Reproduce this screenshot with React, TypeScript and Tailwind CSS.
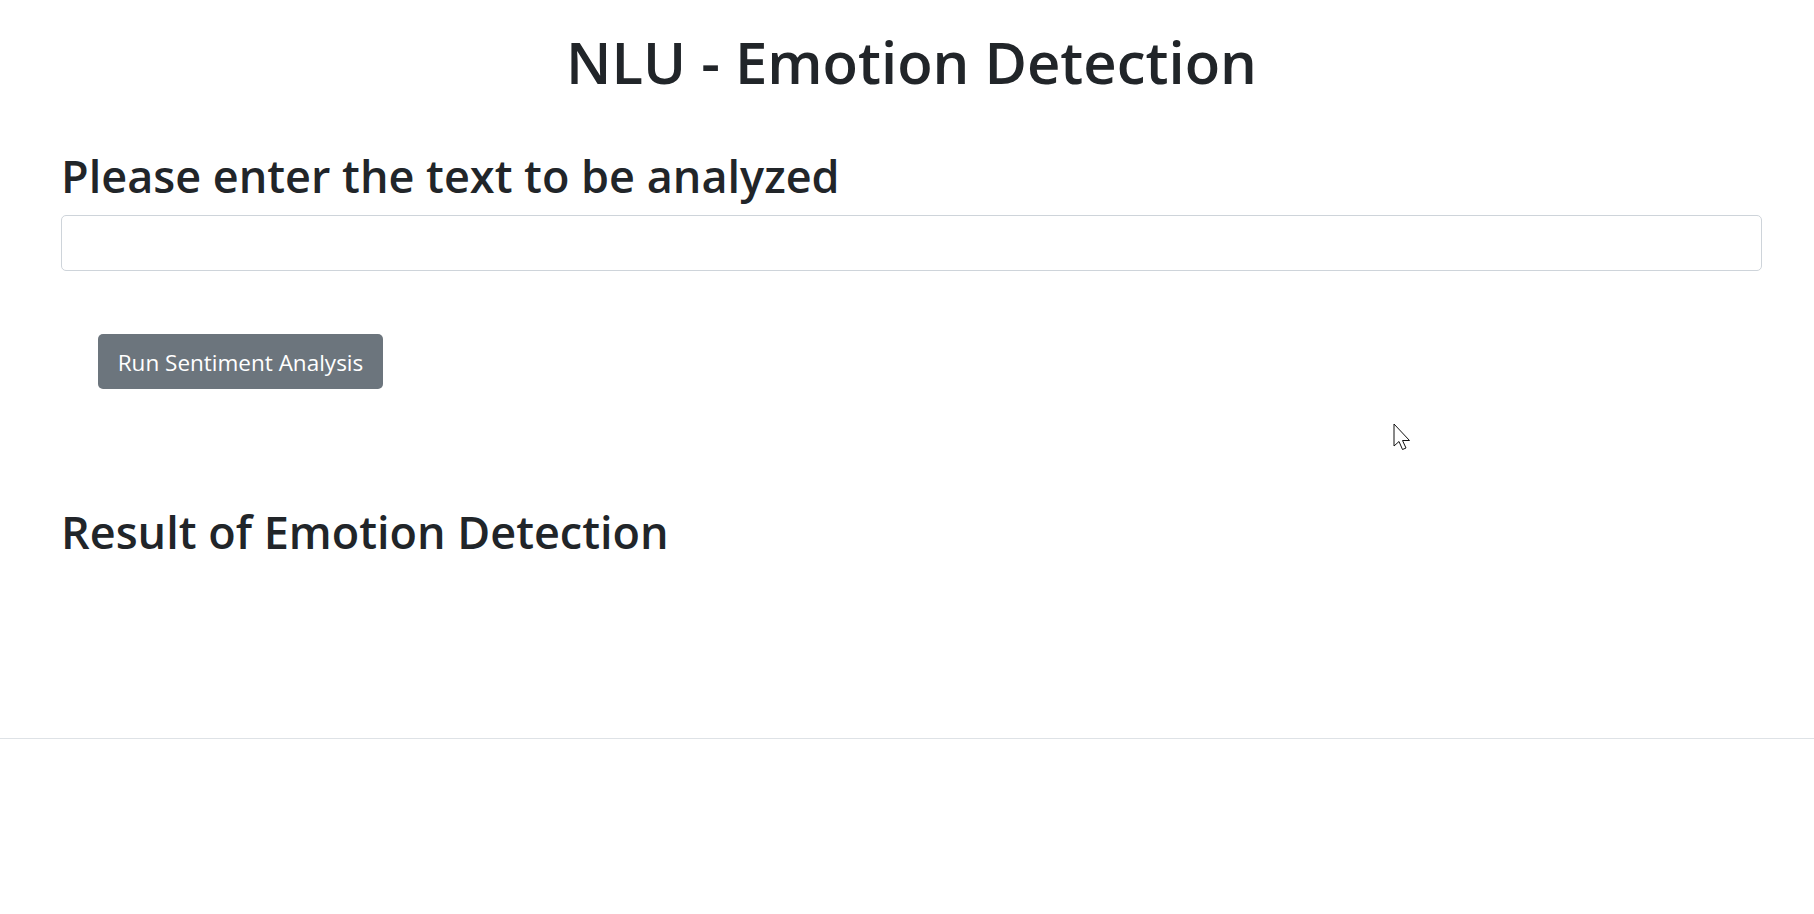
import React from 'react';

function Cursor() {
  return (
    <svg
      className="absolute left-[1393px] top-[423px]"
      width="18"
      height="28"
      viewBox="0 0 18 28"
    >
      <path
        d="M1 1 L1 23 L6 18.5 L9.5 26.5 L13 25 L9.5 17.5 L16.5 17.5 Z"
        fill="#fff"
        stroke="#111"
        strokeWidth="1"
        strokeLinejoin="round"
      />
    </svg>
  );
}

export default function App() {
  return (
    <div className="relative min-h-[914px] w-full bg-white text-[#212529] font-['Open_Sans',sans-serif]">
      <div className="flex flex-col pl-[61px] pr-[52px]">
        <h1 className="mt-[33px] text-center text-[58px] leading-none font-semibold">
          NLU - Emotion Detection
        </h1>
        <h2 className="mt-[62px] text-[45px] leading-none font-semibold">
          Please enter the text to be analyzed
        </h2>
        <input
          type="text"
          className="mt-[17px] h-[56px] w-full rounded-[5px] border border-[#ced4da] bg-white px-4 text-[20px] outline-none"
        />
        <div className="mt-[63px] pl-[37px]">
          <button className="h-[55px] w-[285px] rounded-[5px] bg-[#6c757d] pt-[3px] text-[22.5px] text-white">
            Run Sentiment Analysis
          </button>
        </div>
        <h2 className="mt-[120px] text-[45px] leading-none font-semibold">
          Result of Emotion Detection
        </h2>
      </div>
      <hr className="mt-[184px] border-t border-[#dee2e6]" />
      <Cursor />
    </div>
  );
}
